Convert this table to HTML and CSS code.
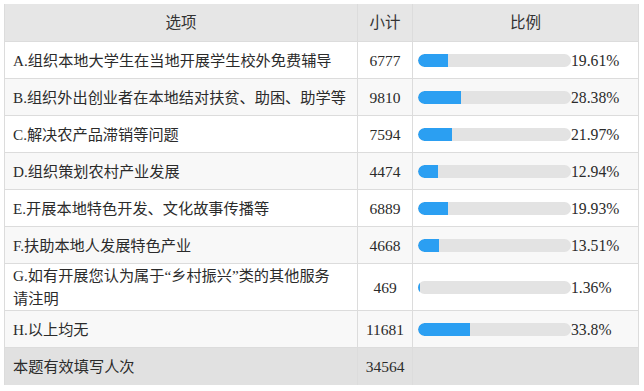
FILE: index.html
```html
<!DOCTYPE html>
<html lang="zh-CN">
<head>
<meta charset="utf-8">
<link rel="stylesheet" href="styles.css">
</head>
<body>
<table class="stat">
  <colgroup><col class="c1"><col class="c2"><col class="c3"></colgroup>
  <thead>
    <tr><th>选项</th><th>小计</th><th>比例</th></tr>
  </thead>
  <tbody>
    <tr><td class="opt">A.组织本地大学生在当地开展学生校外免费辅导</td><td class="num">6777</td><td><div class="pc"><span class="bar"><span class="fill" style="width:19.61%"></span></span><span class="pt">19.61%</span></div></td></tr>
    <tr class="alt"><td class="opt">B.组织外出创业者在本地结对扶贫、助困、助学等</td><td class="num">9810</td><td><div class="pc"><span class="bar"><span class="fill" style="width:28.38%"></span></span><span class="pt">28.38%</span></div></td></tr>
    <tr><td class="opt">C.解决农产品滞销等问题</td><td class="num">7594</td><td><div class="pc"><span class="bar"><span class="fill" style="width:21.97%"></span></span><span class="pt">21.97%</span></div></td></tr>
    <tr class="alt"><td class="opt">D.组织策划农村产业发展</td><td class="num">4474</td><td><div class="pc"><span class="bar"><span class="fill" style="width:12.94%"></span></span><span class="pt">12.94%</span></div></td></tr>
    <tr><td class="opt">E.开展本地特色开发、文化故事传播等</td><td class="num">6889</td><td><div class="pc"><span class="bar"><span class="fill" style="width:19.93%"></span></span><span class="pt">19.93%</span></div></td></tr>
    <tr class="alt"><td class="opt">F.扶助本地人发展特色产业</td><td class="num">4668</td><td><div class="pc"><span class="bar"><span class="fill" style="width:13.51%"></span></span><span class="pt">13.51%</span></div></td></tr>
    <tr class="tall"><td class="opt">G.如有开展您认为属于“乡村振兴”类的其他服务<br>请注明</td><td class="num">469</td><td><div class="pc"><span class="bar"><span class="fill" style="width:1.36%"></span></span><span class="pt">1.36%</span></div></td></tr>
    <tr class="alt"><td class="opt">H.以上均无</td><td class="num">11681</td><td><div class="pc"><span class="bar"><span class="fill" style="width:33.8%"></span></span><span class="pt">33.8%</span></div></td></tr>
    <tr class="sum"><td class="opt">本题有效填写人次</td><td class="num">34564</td><td></td></tr>
  </tbody>
</table>
</body>
</html>
```
FILE: styles.css
```css
html, body {
  margin: 0;
  padding: 0;
  background: #ffffff;
}
body {
  padding: 4px 0 0 4px;
  font-family: "Liberation Serif", "Noto Sans CJK SC", serif;
  font-size: 15.2px;
  color: #2b2b2b;
}
.stat {
  border-collapse: collapse;
  width: 634px;
  table-layout: fixed;
}
.c1 { width: 353px; }
.c2 { width: 55px; }
.c3 { width: 226px; }
.stat th,
.stat td {
  border: 1px solid #dcdcdc;
  line-height: 23px;
  padding: 0;
  vertical-align: middle;
}
.stat th {
  background: #e6e6e6;
  font-weight: normal;
  height: 37px;
  text-align: center;
  font-size: 15.5px;
  color: #333;
  border-top: none;
}
.stat td {
  height: 36px;
}
.stat tr.tall td {
  height: 45px;
}
.stat .opt {
  padding-left: 8px;
  text-align: left;
}
.stat .num {
  text-align: center;
  font-size: 15.5px;
}
.stat tr.alt td {
  background: #f8f8f8;
}
.stat tr.sum td {
  background: #e1e1e1;
  height: 37px;
  border-bottom: none;
}
.pc {
  display: flex;
  align-items: center;
  padding-left: 5px;
}
.bar {
  display: block;
  width: 153px;
  height: 13px;
  border-radius: 7px;
  background: #e3e3e3;
  overflow: hidden;
  flex: none;
}
.fill {
  display: block;
  height: 100%;
  background: #2b9ff2;
  border-radius: 7px 0 0 7px;
}
.pt {
  margin-left: 0;
  font-size: 15.7px;
}
```
